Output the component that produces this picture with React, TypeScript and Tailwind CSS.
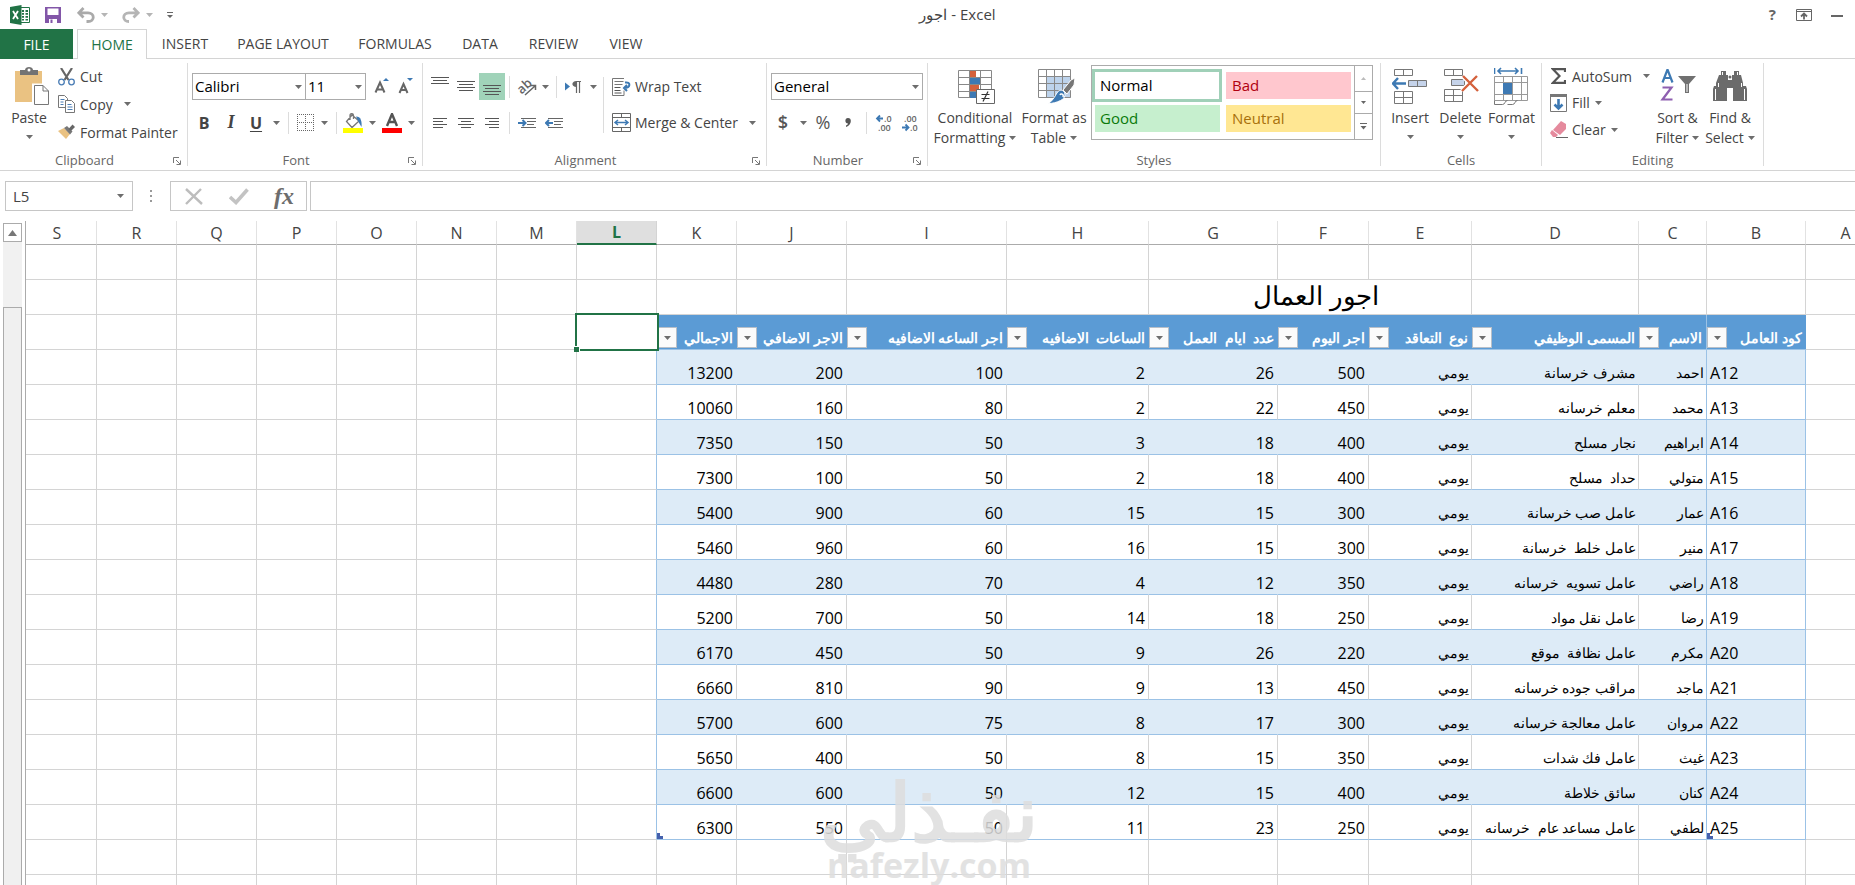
import React from "react";

type Kids = { children?: React.ReactNode };

const columns = [
  { id: "S", w: "w-[71px]" },
  { id: "R", w: "w-[80px]" },
  { id: "Q", w: "w-[80px]" },
  { id: "P", w: "w-[80px]" },
  { id: "O", w: "w-[80px]" },
  { id: "N", w: "w-[80px]" },
  { id: "M", w: "w-[80px]" },
  { id: "L", w: "w-[80px]" },
  { id: "K", w: "w-[80px]" },
  { id: "J", w: "w-[110px]" },
  { id: "I", w: "w-[160px]" },
  { id: "H", w: "w-[142px]" },
  { id: "G", w: "w-[129px]" },
  { id: "F", w: "w-[91px]" },
  { id: "E", w: "w-[103px]" },
  { id: "D", w: "w-[167px]" },
  { id: "C", w: "w-[68px]" },
  { id: "B", w: "w-[99px]" },
  { id: "A", w: "w-[80px]" },
];

const blanks = ["S", "R", "Q", "P", "O", "N", "M"];

const headers = [
  "الاجمالي",
  "الاجر الاضافي",
  "اجر الساعه الاضافيه",
  "الساعات  الاضافيه",
  "عدد  ايام  العمل",
  "اجر اليوم",
  "نوع  التعاقد",
  "المسمى الوظيفي",
  "الاسم",
  "كود العامل",
];

const rows: string[][] = [
  ["13200", "200", "100", "2", "26", "500", "يومي", "مشرف خرسانة", "احمد", "A12"],
  ["10060", "160", "80", "2", "22", "450", "يومي", "معلم خرسانه", "محمد", "A13"],
  ["7350", "150", "50", "3", "18", "400", "يومي", "نجار مسلح", "ابراهيم", "A14"],
  ["7300", "100", "50", "2", "18", "400", "يومي", "حداد  مسلح", "متولي", "A15"],
  ["5400", "900", "60", "15", "15", "300", "يومي", "عامل صب خرسانة", "عمار", "A16"],
  ["5460", "960", "60", "16", "15", "300", "يومي", "عامل خلط  خرسانة", "منير", "A17"],
  ["4480", "280", "70", "4", "12", "350", "يومي", "عامل تسويه  خرسانه", "راضي", "A18"],
  ["5200", "700", "50", "14", "18", "250", "يومي", "عامل نقل مواد", "رضا", "A19"],
  ["6170", "450", "50", "9", "26", "220", "يومي", "عامل نظافة  موقع", "مكرم", "A20"],
  ["6660", "810", "90", "9", "13", "450", "يومي", "مراقب جوده خرسانه", "ماجد", "A21"],
  ["5700", "600", "75", "8", "17", "300", "يومي", "عامل معالجة خرسانه", "مروان", "A22"],
  ["5650", "400", "50", "8", "15", "350", "يومي", "عامل فك شدات", "غيث", "A23"],
  ["6600", "600", "50", "12", "15", "400", "يومي", "سائق خلاطة", "كنان", "A24"],
  ["6300", "550", "50", "11", "23", "250", "يومي", "عامل مساعد عام  خرسانه", "لطفي", "A25"],
];

function Caret({ color = "#6d6d6d" }: { color?: string }) {
  return (
    <svg width="7" height="4" viewBox="0 0 7 4" className="shrink-0">
      <path d="M0 0h7L3.5 4z" fill={color} />
    </svg>
  );
}

function Launcher() {
  return (
    <button aria-label="More options" className="absolute right-[6px] bottom-[1px]">
      <svg width="8" height="8" viewBox="0 0 8 8" fill="none" stroke="#777">
        <path d="M.5 6V.5H6M3 3l4 4M7.5 3.5v4h-4" />
      </svg>
    </button>
  );
}

function Group({ label, width, launcher, children }: Kids & { label: string; width: string; launcher?: boolean }) {
  return (
    <section className={`relative flex h-[103px] shrink-0 flex-col border-r border-[#dcdcdc] ${width}`}>
      <div className="flex h-[90px]">{children}</div>
      <h2 className={`h-[13px] text-center text-[13px] leading-[15px] text-[#666] ${launcher ? "pr-[18px]" : ""}`}>{label}</h2>
      {launcher && <Launcher />}
    </section>
  );
}

function Tool({ w, label, on, children }: Kids & { w: string; label: string; on?: boolean }) {
  return (
    <button
      aria-label={label}
      className={`flex h-[27px] shrink-0 items-center justify-center ${w} ${on ? "bg-[#a0d3b9]" : ""}`}
    >
      {children}
    </button>
  );
}

function Sep({ w }: { w: string }) {
  return (
    <span className={`flex h-[22px] shrink-0 justify-center ${w}`}>
      <span className="w-px bg-[#dcdcdc]" />
    </span>
  );
}

function Lines({ widths, top, align = "center", w = 18 }: { widths: number[]; top: number; align?: string; w?: number }) {
  return (
    <svg width={w} height="27" viewBox={`0 0 ${w} 27`}>
      {widths.map((n, i) => {
        const x = align === "left" ? 0 : align === "right" ? w - n : (w - n) / 2;
        return <rect key={i} x={x} y={top + i * 3} width={n} height="1" fill="#555" />;
      })}
    </svg>
  );
}

function Combo({ label, value, w, h = "h-[27px]" }: { label: string; value: string; w: string; h?: string }) {
  return (
    <div className={`relative shrink-0 ${w}`}>
      <select
        aria-label={label}
        defaultValue={value}
        className={`w-full appearance-none border border-[#ababab] bg-white pl-[2px] text-[15px] text-black ${h}`}
      >
        <option>{value}</option>
      </select>
      <span className="pointer-events-none absolute inset-y-0 right-[4px] flex items-center">
        <Caret />
      </span>
    </div>
  );
}

function BigButton({ lines, w, caretBelow, icon }: { lines: string[]; w: string; caretBelow?: boolean; icon: React.ReactNode }) {
  return (
    <button className={`flex shrink-0 flex-col items-center pt-[3px] whitespace-nowrap ${w}`}>
      <span className="mb-[2px] flex h-[40px] items-center justify-center">{icon}</span>
      {lines.map((t, i) => (
        <span key={t} className="flex h-5 items-center gap-[4px] leading-5">
          {t}
          {!caretBelow && i === lines.length - 1 && <Caret />}
        </span>
      ))}
      {caretBelow && (
        <span className="flex h-[18px] items-center">
          <Caret />
        </span>
      )}
    </button>
  );
}

function RowButton({ text, icon, caret, h }: { text: string; icon: React.ReactNode; caret?: string; h: string }) {
  return (
    <button className={`flex items-center whitespace-nowrap ${h}`}>
      <span className="mr-[4px] flex w-[19px] justify-center">{icon}</span>
      {text}
      {caret && (
        <span className={caret}>
          <Caret />
        </span>
      )}
    </button>
  );
}

function TitleBar() {
  return (
    <header className="grid h-[29px] shrink-0 grid-cols-[1fr_auto_1fr] items-center">
      <div className="flex items-center pl-[10px]">
        <svg width="20" height="20" viewBox="0 0 20 20" aria-label="Excel">
          <path d="M10 2.5h9.5v15H10z" fill="#fff" stroke="#217346" />
          <path d="M12 5h2v2h-2zM15.500 5h2.500v2h-2.500zM12 8h2v1.800h-2zM15.500 8h2.500v1.800h-2.500zM12 11h2v1.800h-2zM15.500 11h2.500v1.800h-2.500zM12 14h2v1.500h-2zM15.500 14h2.500v1.500h-2.500z" fill="#217346" />
          <path d="M0 2 11.500 0v20L0 18z" fill="#217346" />
          <path d="m3 6 5 8M8 6l-5 8" stroke="#fff" strokeWidth="1.800" />
        </svg>
        <button aria-label="Save" className="ml-[15px]">
          <svg width="16" height="16" viewBox="0 0 16 16">
            <path d="M0 0h16v16H0z" fill="#8256a8" />
            <path d="M2.500 1.500h11V8h-11zM4 11h8v5H4z" fill="#fff" />
            <path d="M5.500 12.500h2V16h-2zM4 10.500h8v1.500H4z" fill="#8256a8" />
          </svg>
        </button>
        <button aria-label="Undo" className="ml-[16px] flex items-center gap-[6px]">
          <svg width="18" height="16" viewBox="0 0 18 16" fill="none" stroke="#aaa" strokeWidth="2.800">
            <path d="M6.500 1 1.800 5.800l4.700 4.700M2 5.800h9c7 0 7 8.700 0 8.700H9.500" />
          </svg>
          <Caret color="#b5b5b5" />
        </button>
        <button aria-label="Redo" className="ml-[14px] flex items-center gap-[6px]">
          <svg width="18" height="16" viewBox="0 0 18 16" fill="none" stroke="#b5b5b5" strokeWidth="2.800">
            <path d="m11.500 1 4.700 4.800-4.700 4.700M16 5.800H7c-7 0-7 8.700 0 8.700" />
          </svg>
          <Caret color="#b5b5b5" />
        </button>
        <button aria-label="Customize quick access" className="ml-[14px]">
          <svg width="6" height="8" viewBox="0 0 6 8" fill="#666">
            <path d="M0 1h6v1H0zM0 4h6L3 7z" />
          </svg>
        </button>
      </div>
      <h1 className="pl-[60px] text-[15px] text-[#444]">اجور - Excel</h1>
      <div className="flex items-center justify-end pr-[12px]">
        <button aria-label="Help" className="text-[15px] font-bold text-[#666]">?</button>
        <button aria-label="Ribbon display options" className="ml-[20px]">
          <svg width="16" height="12" viewBox="0 0 16 12" fill="none" stroke="#666">
            <path d="M.5.5h15v11H.5zM.5 2.500h15" />
            <path d="M8 10.500V5M5 7.500l3-3 3 3" strokeWidth="1.800" />
          </svg>
        </button>
        <button aria-label="Minimize" className="ml-[19px] flex h-4 items-end">
          <span className="mb-[6px] h-[2px] w-[12px] bg-[#666]" />
        </button>
      </div>
    </header>
  );
}

function Tabs() {
  const tabs = [
    { t: "INSERT", w: "w-[76px]" },
    { t: "PAGE LAYOUT", w: "w-[120px]" },
    { t: "FORMULAS", w: "w-[104px]" },
    { t: "DATA", w: "w-[66px]" },
    { t: "REVIEW", w: "w-[81px]" },
    { t: "VIEW", w: "w-[64px]" },
  ];
  return (
    <nav className="flex h-[30px] shrink-0 items-stretch text-[14px] text-[#444]">
      <button className="w-[73px] bg-[#217346] text-white">FILE</button>
      <span className="w-[4px] border-b border-[#d4d4d4]" />
      <button className="w-[70px] border border-b-0 border-[#d4d4d4] text-[#217346]">HOME</button>
      {tabs.map((x) => (
        <button key={x.t} className={`border-b border-[#d4d4d4] whitespace-nowrap ${x.w}`}>
          {x.t}
        </button>
      ))}
      <span className="flex-1 border-b border-[#d4d4d4]" />
    </nav>
  );
}

function Clipboard() {
  return (
    <Group label="Clipboard" width="w-[188px]" launcher>
      <div className="flex pl-[5px]">
        <BigButton
          lines={["Paste"]}
          w="w-[48px]"
          caretBelow
          icon={
            <svg width="42" height="38" viewBox="-6 0 42 38">
              <path d="M1 4h27v31H1z" fill="#eac282" />
              <path d="M6 8V3h5c0-4 8-4 8 0h5v5z" fill="#737373" />
              <circle cx="15" cy="3" r="1.500" fill="#fff" />
              <path d="M19.500 18h10l5 5v14h-15z" fill="#fff" stroke="#fff" strokeWidth="3" />
              <path d="M20.500 18.500h8.500l5.500 5.500v13.500h-14zM29 18.500V24h5.500" fill="#fff" stroke="#777" />
            </svg>
          }
        />
        <div className="ml-[4px] flex flex-col">
          <RowButton
            text="Cut"
            h="h-[27px]"
            icon={
              <svg width="17" height="18" viewBox="0 0 17 18" fill="none">
                <path d="m3 0 7.500 12M14 0 6.500 12" stroke="#666" strokeWidth="2.200" />
                <circle cx="3.500" cy="14" r="2.800" stroke="#4a7db5" strokeWidth="1.300" />
                <circle cx="13.500" cy="14" r="2.800" stroke="#4a7db5" strokeWidth="1.300" />
              </svg>
            }
          />
          <RowButton
            text="Copy"
            h="h-[28px]"
            caret="ml-[11px]"
            icon={
              <svg width="17" height="18" viewBox="0 0 17 18" fill="#fff" stroke="#777">
                <path d="M.5.5h6l3 3v9h-9z" />
                <path d="M2.500 4.500h4M2.500 7h3M2.500 9.500h3" stroke="#4a7db5" />
                <path d="M7.500 5.500h6l3 3v9h-9z" />
                <path d="M9.500 9.500h4M9.500 12h5M9.500 14.500h5" stroke="#4a7db5" />
              </svg>
            }
          />
          <RowButton
            text="Format Painter"
            h="h-[28px]"
            icon={
              <svg width="17" height="16" viewBox="0 0 17 16">
                <path d="m0 7 6-3 6 6-4 5z" fill="#eac282" />
                <path d="m6 4 3-2 5.500 5.500-2.500 3z" fill="#777" />
                <path d="m10.500 5 4-4.500L17 3l-4 4z" fill="#666" />
              </svg>
            }
          />
        </div>
      </div>
    </Group>
  );
}

function FontGroup() {
  return (
    <Group label="Font" width="w-[235px]" launcher>
      <div className="flex flex-col pt-[10px]">
        <div className="flex pl-[4px]">
          <Combo label="Font name" value="Calibri" w="w-[114px]" />
          <Combo label="Font size" value="11" w="-ml-px w-[61px]" />
          <Tool w="ml-[4px] w-[24px]" label="Increase font size">
            <svg width="16" height="18" viewBox="0 0 16 18">
              <path d="m1.500 14.500 4.500-10 4.500 10M3 11.500h6" fill="none" stroke="#666" strokeWidth="2" />
              <path d="M9 3h6l-3-3z" fill="#3d79b3" />
            </svg>
          </Tool>
          <Tool w="w-[24px]" label="Decrease font size">
            <svg width="16" height="18" viewBox="0 0 16 18">
              <path d="m1.500 15 4-9 4 9M3 12h5" fill="none" stroke="#666" strokeWidth="2" />
              <path d="M9 0h6l-3 3z" fill="#3d79b3" />
            </svg>
          </Tool>
        </div>
        <div className="mt-[9px] flex items-center pl-[2px] text-[16px] text-[#444]">
          <Tool w="w-[28px]" label="Bold"><b>B</b></Tool>
          <Tool w="w-[26px]" label="Italic"><b className="font-['Liberation_Serif'] text-[18px] italic">I</b></Tool>
          <Tool w="w-[24px]" label="Underline"><b className="underline underline-offset-2">U</b></Tool>
          <Tool w="w-[16px]" label="Underline styles"><Caret /></Tool>
          <Sep w="w-[8px]" />
          <Tool w="w-[26px]" label="Borders">
            <svg width="17" height="17" viewBox="0 0 17 17" fill="none" stroke="#666" strokeDasharray="1 1">
              <path d="M0 .5h17M0 8.500h17M0 16.500h17M.5 0v17M8.500 0v17M16.500 0v17" />
            </svg>
          </Tool>
          <Tool w="w-[12px]" label="Border styles"><Caret /></Tool>
          <Sep w="w-[12px]" />
          <Tool w="w-[22px]" label="Fill color">
            <svg width="20" height="20" viewBox="0 0 20 20">
              <path d="m9 2 7 6-7 6.500-5.500-6zM7 7V2.500C7 0 10.500 0 10.500 2.500V6" fill="#fff" stroke="#777" strokeWidth="1.300" />
              <path d="M13 3.500c5 0 6 5 5.500 10.500l-3-5z" fill="#3d79b3" />
              <path d="M0 15h20v5H0z" fill="#ff0" />
            </svg>
          </Tool>
          <Tool w="w-[16px]" label="Fill colors"><Caret /></Tool>
          <Tool w="w-[24px]" label="Font color">
            <svg width="20" height="20" viewBox="0 0 20 20">
              <path d="m5 13 5-12 5 12M7 9h6" fill="none" stroke="#555" strokeWidth="2.400" />
              <path d="M0 15h20v5H0z" fill="#f00" />
            </svg>
          </Tool>
          <Tool w="w-[14px]" label="Font colors"><Caret /></Tool>
        </div>
      </div>
    </Group>
  );
}

function Alignment() {
  return (
    <Group label="Alignment" width="w-[344px]" launcher>
      <div className="flex flex-col pt-[10px] pl-[4px]">
        <div className="flex items-center">
          <Tool w="w-[26px]" label="Top align"><Lines widths={[18, 14, 18]} top={4} /></Tool>
          <Tool w="w-[26px]" label="Middle align"><Lines widths={[18, 14, 18, 14]} top={8} /></Tool>
          <Tool w="w-[26px]" label="Bottom align" on><Lines widths={[18, 14, 18, 14]} top={12} /></Tool>
          <Sep w="w-[8px]" />
          <Tool w="w-[28px]" label="Orientation">
            <svg width="20" height="18" viewBox="0 0 20 18" className="overflow-visible">
              <text x="0" y="13" fontSize="13" fontWeight="600" fill="#666" transform="rotate(-42 7 9)">ab</text>
              <path d="m8 17 10-9M13.500 7.500H18.500V12" fill="none" stroke="#666" strokeWidth="1.500" />
            </svg>
          </Tool>
          <Tool w="w-[8px]" label="Orientation options"><Caret /></Tool>
          <Sep w="w-[15px]" />
          <Tool w="w-[18px]" label="Text direction">
            <svg width="16" height="12" viewBox="0 0 16 12">
              <path d="m0 1.500 5 4-5 4z" fill="#3d79b3" />
              <path d="M11 .5h5M11.500.500V12M14.500.500V12" stroke="#666" strokeWidth="1.200" />
              <path d="M11.500 0C6 0 6 6 11.500 6z" fill="#666" />
            </svg>
          </Tool>
          <Tool w="w-[22px]" label="Text direction options"><Caret /></Tool>
        </div>
        <div className="mt-[9px] flex items-center">
          <Tool w="w-[26px]" label="Align left"><Lines w={14} align="left" widths={[14, 10, 14, 10]} top={9} /></Tool>
          <Tool w="w-[26px]" label="Center"><Lines w={16} widths={[16, 10, 16, 10]} top={9} /></Tool>
          <Tool w="w-[26px]" label="Align right"><Lines w={14} align="right" widths={[14, 10, 14, 10]} top={9} /></Tool>
          <Sep w="w-[8px]" />
          <Tool w="w-[28px]" label="Increase indent">
            <svg width="18" height="12" viewBox="0 0 18 12">
              <path d="M3 1.500h15M9 4.500h9M9 7.500h7M3 10.500h15" stroke="#666" />
              <path d="M0 6h7M4.500 3 7.500 6l-3 3" fill="none" stroke="#3d79b3" strokeWidth="2" />
            </svg>
          </Tool>
          <Tool w="w-[26px]" label="Decrease indent">
            <svg width="18" height="12" viewBox="0 0 18 12">
              <path d="M3 1.500h15M9 4.500h9M9 7.500h7M3 10.500h15" stroke="#666" />
              <path d="M1 6h7M4 3 1 6l3 3" fill="none" stroke="#3d79b3" strokeWidth="2" />
            </svg>
          </Tool>
        </div>
      </div>
      <div className="mt-[14px] ml-[-1px] h-[56px] w-px bg-[#dcdcdc]" />
      <div className="flex flex-col gap-[9px] pt-[10px] pl-[8px]">
        <RowButton
          text="Wrap Text"
          h="h-[27px]"
          icon={
            <svg width="19" height="18" viewBox="0 0 19 18" fill="none" stroke="#777">
              <path d="M12 .5H.5v17H12v-5M2.500 3.500h9M2.500 6.500h8" />
              <path d="M2.500 9.500h6M2.500 12.500h6M2.500 15h7" stroke="#555" />
              <path d="M13 4.500c6-1 6 5.500-1 5.500M15 7l-3 3 3 3" stroke="#3d79b3" strokeWidth="2" />
            </svg>
          }
        />
        <RowButton
          text="Merge & Center"
          h="h-[27px]"
          caret="ml-[11px]"
          icon={
            <svg width="19" height="19" viewBox="0 0 19 19" fill="none" stroke="#666">
              <path d="M.5.5h18v18H.5zM.5 4.500h18M.5 14.500h18M9.500.500v4M9.500 14.500v4" />
              <path d="M3 9.500h13M6 7 3 9.500 6 12M13 7l3 2.500-3 2.500" stroke="#3d79b3" strokeWidth="1.500" />
            </svg>
          }
        />
      </div>
    </Group>
  );
}

function NumberGroup() {
  return (
    <Group label="Number" width="w-[161px]" launcher>
      <div className="flex flex-col pt-[10px]">
        <div className="pl-[4px]">
          <Combo label="Number format" value="General" w="w-[152px]" />
        </div>
        <div className="mt-[9px] flex items-center pl-[2px] text-[#555]">
          <Tool w="w-[28px]" label="Currency"><span className="text-[18px] font-semibold">$</span></Tool>
          <Tool w="w-[12px]" label="Currency options"><Caret /></Tool>
          <Tool w="w-[28px]" label="Percent"><span className="text-[18px]">%</span></Tool>
          <Tool w="w-[22px]" label="Comma style">
            <svg width="6" height="10" viewBox="0 0 6 10">
              <path d="M3 0c4.500 0 3.500 7-2 9V7.500C2.500 7 3 6 3 5.500-.500 5.500-.500 0 3 0z" fill="#555" />
            </svg>
          </Tool>
          <Sep w="w-[14px]" />
          <Tool w="w-[22px]" label="Increase decimal">
            <svg width="16" height="18" viewBox="0 0 16 18" fontSize="9" fontWeight="600" fill="#666" className="overflow-visible">
              <text x="8" y="8">.0</text>
              <text x="2" y="17">.00</text>
              <path d="M1 4.500h6M4 1.500l-3 3 3 3" fill="none" stroke="#3d79b3" strokeWidth="1.800" />
            </svg>
          </Tool>
          <Tool w="w-[30px]" label="Decrease decimal">
            <svg width="16" height="18" viewBox="0 0 16 18" fontSize="9" fontWeight="600" fill="#666" className="overflow-visible">
              <text x="2" y="8">.00</text>
              <text x="8" y="17">.0</text>
              <path d="M0 13.500h6M3.500 10.500l3 3-3 3" fill="none" stroke="#3d79b3" strokeWidth="1.800" />
            </svg>
          </Tool>
        </div>
      </div>
    </Group>
  );
}

function Styles() {
  return (
    <Group label="Styles" width="w-[453px]">
      <div className="flex pl-[4px]">
        <BigButton
          lines={["Conditional", "Formatting"]}
          w="w-[86px]"
          icon={
            <svg width="42" height="36" viewBox="-4 -1 42 36">
              <path d="M.5 1.500h33v27H.5zM.5 8.500h33M.5 15.500h33M.5 22.500h33M11.500 1v28M22.500 1v28" fill="none" stroke="#888" />
              <path d="M12 2h6v6h-6zM12 16h9v6h-9z" fill="#d4613c" />
              <path d="M12 9h10v6H12zM12 23h6v6h-6z" fill="#3d79b3" />
              <path d="M18.500 20.500h18v14h-18z" fill="#fff" stroke="#666" />
              <path d="M23.500 25.500h8M23.500 29.500h8M30 22.500l-5 10" stroke="#333" strokeWidth="1.200" />
            </svg>
          }
        />
        <BigButton
          lines={["Format as", "Table"]}
          w="w-[72px]"
          icon={
            <svg width="44" height="36" viewBox="-6 -1 44 36">
              <path d="M9 7h24v22H9z" fill="#bdd3ec" />
              <path d="M.5.500h32v28H.5zM.5 7.500h32M.5 14.500h32M.5 21.500h32M8.500.500v28M16.500.500v28M24.500.500v28" fill="none" stroke="#888" />
              <path d="m37 9-1 7-7 9-4-4 8-10z" fill="#777" stroke="#fff" />
              <path d="M24.500 21.500c4 2 3 8-2 10-4 2-8 3-12 3 3-2 5-5 7-8 2-4 4-6 7-5z" fill="#3d79b3" stroke="#fff" />
              <path d="M22 26c1-2 4-1 3 2" fill="none" stroke="#fff" strokeWidth="1.500" />
            </svg>
          }
        />
      </div>
      <div className="mt-[2px] ml-px flex h-[75px] w-[282px] border border-[#ababab] text-[15px]">
        <div className="grid flex-1 grid-cols-[130px_125px] grid-rows-[33px_33px] content-start gap-x-[4px] pt-[3px]">
          <button className="border-[3px] border-[#a0d0b8] pl-[5px] text-left text-black">Normal</button>
          <button className="my-[3px] bg-[#ffc7ce] pl-[6px] text-left text-[#b0000f]">Bad</button>
          <button className="mt-[3px] ml-[3px] h-[27px] w-[125px] bg-[#c6efce] pl-[5px] text-left text-[#0a7a0a]">Good</button>
          <button className="mt-[3px] h-[27px] bg-[#ffe793] pl-[6px] text-left text-[#a8700b]">Neutral</button>
        </div>
        <div className="grid w-[18px] grid-rows-[25px_23px_25px] border-l border-[#ababab]">
          <button aria-label="Previous styles" className="flex items-center justify-center">
            <svg width="5" height="3" viewBox="0 0 5 3"><path d="M0 3h5L2.500 0z" fill="#bbb" /></svg>
          </button>
          <button aria-label="Next styles" className="flex items-center justify-center border-y border-[#ababab]">
            <svg width="5" height="3" viewBox="0 0 5 3"><path d="M0 0h5L2.500 3z" fill="#666" /></svg>
          </button>
          <button aria-label="All styles" className="flex items-center justify-center">
            <svg width="7" height="7" viewBox="0 0 7 7" fill="#666"><path d="M0 0h7v1H0zM.5 3h6L3.500 6.500z" /></svg>
          </button>
        </div>
      </div>
    </Group>
  );
}

function Cells() {
  return (
    <Group label="Cells" width="w-[161px]">
      <div className="flex pl-[4px]">
        <BigButton
          lines={["Insert"]}
          w="w-[50px]"
          caretBelow
          icon={
            <svg width="36" height="36" viewBox="1 0 36 36" fill="none" stroke="#777">
              <path d="M3.500 1.500h18v6h-18zM12.500 1.500v6M3.500 23.500h18v12h-18zM3.500 29.500h18M12.500 23.500v12" />
              <path d="M17.500 12.500h18v6h-18zM26.500 12.500v6" fill="#c5d3ea" />
              <path d="M2 15.500h13M7 10l-5 5.500 5 5.500" stroke="#3d79b3" strokeWidth="2.400" />
            </svg>
          }
        />
        <BigButton
          lines={["Delete"]}
          w="w-[51px]"
          caretBelow
          icon={
            <svg width="36" height="36" viewBox="0 0 36 36" fill="none" stroke="#777">
              <path d="M1.500 1.500h18v6h-18zM10.500 1.500v6M1.500 21.500h18v12h-18zM1.500 27.500h18M10.500 21.500v12" />
              <path d="M8.500 11.500h13v6h-13z" fill="#c5d3ea" />
              <path d="m20 8 15 15M34 8 19 23" stroke="#fff" strokeWidth="5" />
              <path d="m20 8 15 15M34 8 19 23" stroke="#d4613c" strokeWidth="2.400" />
            </svg>
          }
        />
        <BigButton
          lines={["Format"]}
          w="w-[51px]"
          caretBelow
          icon={
            <svg width="35" height="38" viewBox="0 0 35 38" fill="none" stroke="#777">
              <path d="M.5 9.500h33v24H.5zM.5 15.500h33M.5 27.500h33M9.500 9.500v24M18.500 9.500v24M27.500 9.500v24" stroke="#999" />
              <path d="M9 16h9v11H9z" fill="#3d79b3" stroke="none" />
              <path d="M.5 33.500v4h8c3 0 2-4 5-4M13.500 37.500h5c3 0 2-4 5-4" />
              <path d="M.5 1v6M27.500 1v6M4 4h20M7 1 4 4l3 3M21 1l3 3-3 3" stroke="#3d79b3" strokeWidth="1.600" />
            </svg>
          }
        />
      </div>
    </Group>
  );
}

function Editing() {
  return (
    <Group label="Editing" width="w-[222px]">
      <div className="flex w-full pl-[7px]">
        <div className="flex w-[103px] flex-col">
          <RowButton
            text="AutoSum"
            h="h-[26px]"
            caret="ml-[11px]"
            icon={
              <svg width="15" height="16" viewBox="0 0 15 16" fill="none" stroke="#555">
                <path d="M14 4V1.200H2L8.500 8 2 14.800h12V12" strokeWidth="2.200" />
              </svg>
            }
          />
          <RowButton
            text="Fill"
            h="h-[27px]"
            caret="ml-[5px]"
            icon={
              <svg width="17" height="18" viewBox="0 0 17 18" fill="none">
                <path d="M.5.500h16v17H.5z" stroke="#777" />
                <path d="M0 0h17v3H0z" fill="#777" />
                <path d="M8.500 5v9M4.500 10.500l4 4 4-4" stroke="#3d79b3" strokeWidth="2.600" />
              </svg>
            }
          />
          <RowButton
            text="Clear"
            h="h-[27px]"
            caret="ml-[5px]"
            icon={
              <svg width="18" height="17" viewBox="0 0 18 17">
                <path d="m11 0 5 3v5l-6 6-7-5z" fill="#e58a9d" />
                <path d="m2 9 6 5-2 2H3l-3-4z" fill="#e58a9d" />
                <path d="M6 16.500h12" stroke="#666" />
              </svg>
            }
          />
        </div>
        <BigButton
          lines={["Sort &", "Filter"]}
          w="w-[51px]"
          icon={
            <svg width="36" height="34" viewBox="-1 1 36 34" fill="none">
              <path d="m1.500 14.500 5-13 5 13M3 10h7" stroke="#3d79b3" strokeWidth="2.200" />
              <path d="M1.500 19.500h9L1.500 31.500h10" stroke="#8e5fb0" strokeWidth="2.200" />
              <path d="M17 8h18l-7 8v9h-4v-9z" fill="#707070" />
              <path d="M26 16v8" stroke="#fff" />
            </svg>
          }
        />
        <BigButton
          lines={["Find &", "Select"]}
          w="w-[54px]"
          icon={
            <svg width="34" height="32" viewBox="0 0 34 32" fill="#6b6b6b">
              <path d="M8 1h5v4h2v5h4V5h2V1h5v4h2l2 8v3h3l1 3v12H20V18h-6v13H0V19l1-3h2v-3l3-8h2z" />
              <path d="M9.500 2v3M24.500 2v3M5.500 13v4M28.500 13v4M2.500 19v11M31.500 19v11" stroke="#fff" />
              <circle cx="17" cy="7" r="1.500" fill="#6b6b6b" />
            </svg>
          }
        />
      </div>
    </Group>
  );
}

function FormulaBar() {
  return (
    <div className="flex h-[30px] shrink-0 items-stretch pl-[5px]">
      <div className="relative w-[128px]">
        <input aria-label="Name box" defaultValue="L5" className="h-full w-full border border-[#c6c6c6] pl-[7px] text-[15px] text-[#444]" />
        <span className="pointer-events-none absolute inset-y-0 right-[9px] flex items-center">
          <Caret />
        </span>
      </div>
      <svg width="37" height="30" viewBox="0 0 37 30" fill="#999">
        <path d="M17 9h2v2h-2zM17 14h2v2h-2zM17 19h2v2h-2z" />
      </svg>
      <div className="flex w-[137px] items-center border border-[#c6c6c6]">
        <button aria-label="Cancel" className="flex w-[45px] justify-center">
          <svg width="18" height="17" viewBox="0 0 18 17" fill="none" stroke="#bdbdbd" strokeWidth="2.400">
            <path d="m1 1 16 15M16 1 1 16" />
          </svg>
        </button>
        <button aria-label="Enter" className="flex w-[46px] justify-center">
          <svg width="20" height="17" viewBox="0 0 20 17" fill="none" stroke="#c3c3c3" strokeWidth="3.600">
            <path d="m1 9 6 5.500L18.500 1.500" />
          </svg>
        </button>
        <button aria-label="Insert function" className="w-[44px] font-['Liberation_Serif'] text-[24px] leading-6 font-bold text-[#6d6d6d] italic">
          fx
        </button>
      </div>
      <input aria-label="Formula" className="ml-[3px] min-w-0 flex-1 border border-r-0 border-[#c6c6c6] px-2" />
    </div>
  );
}

const line = "border-r-[#d4d4d4]";

function Blank({ edge = line }: { edge?: string }) {
  return <td className={`h-[35px] border-r border-b border-b-[#d4d4d4] ${edge}`} />;
}

function EmptyRow() {
  return (
    <tr>
      {columns.map((c) => (
        <Blank key={c.id} />
      ))}
    </tr>
  );
}

function Sheet() {
  return (
    <table className="w-[1781px] table-fixed border-separate border-spacing-0 border-l border-[#ababab] text-[16px] leading-5 text-black">
      <colgroup>
        {columns.map((c) => (
          <col key={c.id} className={c.w} />
        ))}
      </colgroup>
      <thead>
        <tr>
          {columns.map((c) => (
            <th
              key={c.id}
              className={
                c.id === "L"
                  ? "h-[24px] border-r border-b-2 border-r-[#d4d4d4] border-b-[#217346] bg-[#dfdfdf] p-0 font-bold text-[#217346]"
                  : `h-[24px] border-r border-b border-r-[#e2e2e2] border-b-[#ababab] p-0 font-normal text-[#444] ${c.id === "S" ? "pr-[8px]" : ""}`
              }
            >
              {c.id}
            </th>
          ))}
        </tr>
      </thead>
      <tbody>
        <EmptyRow />
        <tr>
          {columns.slice(0, 12).map((c) => (
            <Blank key={c.id} />
          ))}
          <td colSpan={3} dir="rtl" className="h-[35px] border-r border-b border-[#d4d4d4] p-0 pl-[10px] text-center align-top text-[26px] leading-[30px]">
            <div className="h-[30px] overflow-visible">اجور العمال</div>
          </td>
          {columns.slice(15).map((c) => (
            <Blank key={c.id} />
          ))}
        </tr>
        <tr>
          {blanks.map((c) => (
            <Blank key={c} />
          ))}
          <td className="relative h-[35px] border-b border-[#d4d4d4]">
            <div className="absolute -inset-x-[2px] -top-[2px] -bottom-[2px] z-10 border-2 border-[#217346]" />
            <div className="absolute -bottom-[3px] -left-[3px] z-20 h-[6px] w-[6px] border-t border-r border-white bg-[#217346]" />
          </td>
          {headers.map((h, i) => (
            <th
              key={h}
              scope="col"
              className={`h-[35px] border-b border-[#9bc2e6] bg-[#5b9bd5] p-0 align-bottom font-bold text-white ${i === 8 ? "border-r" : ""}`}
            >
              <div className="flex items-end justify-between pb-px">
                <button aria-label="Filter" className="flex h-[21px] w-[20px] shrink-0 items-center justify-center border border-[#b8bfc8] bg-[#fbfbfb]">
                  <Caret />
                </button>
                <span dir="rtl" className="pr-[4px] text-[14px] whitespace-pre">
                  {h}
                </span>
              </div>
            </th>
          ))}
          <Blank />
        </tr>
        {rows.map((r, n) => (
          <tr key={r[9]}>
            {blanks.map((c) => (
              <Blank key={c} />
            ))}
            <Blank edge="border-r-[#9bc2e6]" />
            {r.map((v, i) => {
              const band = n % 2 === 0;
              const edge = i >= 8 ? "border-r-[#9bc2e6]" : band ? "border-r-[#ddebf7]" : "border-r-[#d4d4d4]";
              const arabic = i > 5 && i < 9;
              return (
                <td
                  key={i}
                  dir={arabic ? "rtl" : "ltr"}
                  className={`relative h-[35px] border-r border-b border-b-[#9bc2e6] px-[3px] pt-0 pb-px align-bottom whitespace-pre ${edge} ${
                    band ? "bg-[#ddebf7]" : ""
                  } ${i === 9 ? "text-left" : "text-right"} ${arabic ? "text-[14px]" : ""}`}
                >
                  {v}
                  {n === 13 && (i === 0 || i === 9) && (
                    <svg width="6" height="6" viewBox="0 0 6 6" className="absolute bottom-0 left-0">
                      <path d="M0 0h3v3h3v3H0z" fill="#4560ad" />
                    </svg>
                  )}
                </td>
              );
            })}
            <Blank />
          </tr>
        ))}
        <EmptyRow />
        <EmptyRow />
      </tbody>
    </table>
  );
}

export default function App() {
  return (
    <div className="flex h-screen flex-col overflow-hidden bg-white font-['Open_Sans','Noto_Sans',sans-serif] text-[14px] text-[#444]">
      <TitleBar />
      <Tabs />
      <div className="flex h-[112px] shrink-0 overflow-hidden border-b border-[#d4d4d4] pt-[4px]">
        <Clipboard />
        <FontGroup />
        <Alignment />
        <NumberGroup />
        <Styles />
        <Cells />
        <Editing />
      </div>
      <div className="h-[10px] shrink-0" />
      <FormulaBar />
      <main className="relative mt-[10px] flex min-h-0 flex-1 overflow-hidden">
        <div className="flex w-[25px] shrink-0 flex-col pt-[2px] pr-[3px] pl-[3px]">
          <button aria-label="Scroll up" className="flex h-[19px] shrink-0 items-center justify-center border border-[#ababab]">
            <svg width="9" height="6" viewBox="0 0 9 6"><path d="M0 6h9L4.500 0z" fill="#777" /></svg>
          </button>
          <div className="h-[65px] shrink-0 bg-[#f1f1f1]" />
          <div className="flex-1 border border-b-0 border-[#ababab] bg-[#f0f0f0]" />
        </div>
        <div className="min-w-0 flex-1 overflow-hidden">
          <Sheet />
        </div>
        <div className="pointer-events-none absolute bottom-0 left-[821px] z-30 flex w-[216px] flex-col items-center font-bold text-[#dedede] opacity-85">
          <span dir="rtl" className="text-[80px] leading-[70px]">نفـذلي</span>
          <span className="text-[34px] leading-[40px]">nafezly.com</span>
        </div>
      </main>
    </div>
  );
}
